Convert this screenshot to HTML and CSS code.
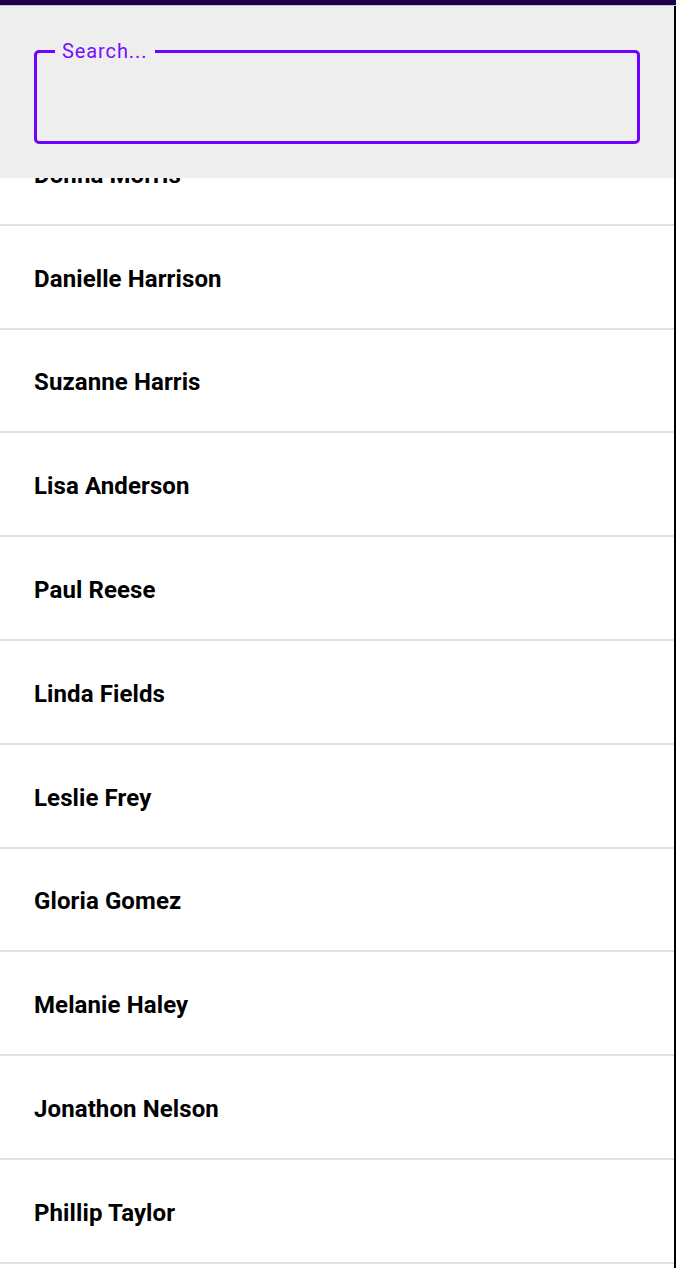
FILE: index.html
```html
<!DOCTYPE html>
<html lang="en">
<head>
<meta charset="utf-8">
<title>People</title>
<link rel="stylesheet" href="styles.css">
</head>
<body>
<div class="statusbar"></div>
<div class="app">
  <header class="search-bar">
    <fieldset class="search-field">
      <legend class="search-label">Search...</legend>
      <input class="search-input" type="text" aria-label="Search">
    </fieldset>
  </header>
  <ul class="people">
    <li class="person">Donna Morris</li>
    <li class="person">Danielle Harrison</li>
    <li class="person">Suzanne Harris</li>
    <li class="person">Lisa Anderson</li>
    <li class="person">Paul Reese</li>
    <li class="person">Linda Fields</li>
    <li class="person">Leslie Frey</li>
    <li class="person">Gloria Gomez</li>
    <li class="person">Melanie Haley</li>
    <li class="person">Jonathon Nelson</li>
    <li class="person">Phillip Taylor</li>
  </ul>
</div>
</body>
</html>
```
FILE: styles.css
```css
html, body {
  margin: 0;
  padding: 0;
  height: 100%;
  overflow: hidden;
  background: #ffffff;
  font-family: Roboto, "Liberation Sans", Arial, sans-serif;
}

.statusbar {
  height: 5px;
  background: #1c0048;
  border-bottom: 1px solid #cbbbe6;
}

.app {
  position: relative;
  height: calc(100% - 6px);
  border-right: 2px solid #000000;
  overflow: hidden;
}

.search-bar {
  position: absolute;
  top: 0;
  left: 0;
  right: 0;
  z-index: 2;
  height: 172px;
  box-sizing: border-box;
  padding: 34px 34px 0 34px;
  background: #eeeeee;
}

.search-field {
  margin: 0;
  padding: 0;
  height: 104px;
  box-sizing: border-box;
  border: 3px solid #7000ff;
  border-radius: 5px;
  min-width: 0;
}

.search-label {
  margin-left: 18px;
  padding: 0 8px 0 7px;
  font-size: 20px;
  line-height: 22px;
  letter-spacing: 0.9px;
  color: #7410ff;
}

.search-input {
  display: block;
  box-sizing: border-box;
  width: 100%;
  padding: 0 24px;
  border: 0;
  outline: 0;
  background: transparent;
  font: inherit;
  font-size: 20px;
  height: 60px;
}

.people {
  list-style: none;
  margin: 0;
  padding: 116px 0 0 0;
}

.person {
  height: 103.8px;
  box-sizing: border-box;
  border-bottom: 2px solid #e0e0e0;
  display: flex;
  align-items: center;
  padding: 4px 0 0 34px;
  font-size: 24px;
  font-weight: 700;
  letter-spacing: 0.1px;
  color: #000000;
}
```
